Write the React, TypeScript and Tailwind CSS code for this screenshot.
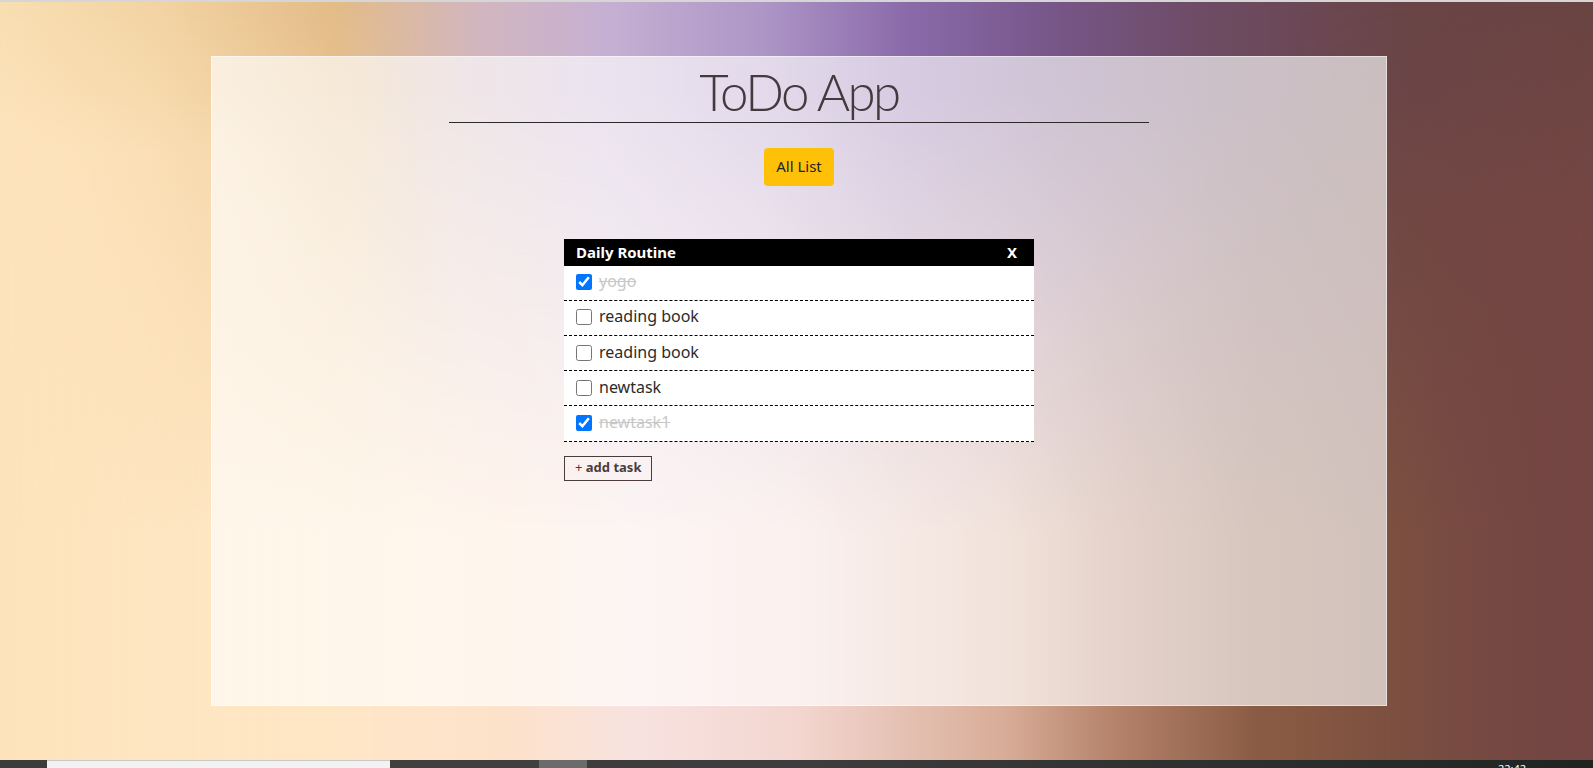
import React from "react";

const tasks = [
  { name: "yogo", done: true },
  { name: "reading book", done: false },
  { name: "reading book", done: false },
  { name: "newtask", done: false },
  { name: "newtask1", done: true },
];

function TaskRow({ name, done }: { name: string; done: boolean }) {
  return (
    <li className="flex h-[35.2px] items-center gap-[7px] border-b border-dashed border-black bg-white px-3 pb-[3px]">
      <input type="checkbox" checked={done} readOnly className="mt-[2px] h-4 w-4 accent-[#0075ff]" />
      <span className={done ? "text-[#c8c8c8] line-through" : "text-[#2b2b2b]"}>{name}</span>
    </li>
  );
}

export default function App() {
  return (
    <div
      className="flex h-[768px] w-full flex-col overflow-hidden text-[16px]"
      style={{ fontFamily: "'Noto Sans', 'Open Sans', sans-serif" }}
    >
      <div className="h-[2px] bg-[#d6d6d6]" />

      <main className="relative flex-1 bg-[linear-gradient(90deg,#ffedd2_0%,#ffe8c8_20%,#fde2cb_32%,#f8e2e0_40%,#f3d6d0_50%,#d8ad98_63%,#b5826a_70%,#8a5b44_79%,#80553f_88%,#744743_100%)]">
        <div className="pointer-events-none absolute inset-0 bg-[linear-gradient(90deg,#f8dfb2_0%,#f3d3a3_10%,#e3bc88_21%,#d2b6bf_30%,#c6b0d2_38%,#ad95c6_48%,#8a6aaa_57%,#775689_66%,#6d4b63_76%,#6a4547_88%,#6a4442_100%)] [mask-image:linear-gradient(to_bottom,black_0%,black_12%,transparent_70%)]" />
        <div className="pointer-events-none absolute inset-y-0 left-0 w-[420px] bg-[linear-gradient(90deg,#fde3bb_0%,rgba(253,227,187,0)_100%)] [mask-image:linear-gradient(to_bottom,transparent_0%,black_20%,black_100%)]" />
        <div className="pointer-events-none absolute inset-y-0 right-0 w-[300px] bg-[linear-gradient(270deg,#744644_0%,rgba(116,70,68,0)_100%)] [mask-image:linear-gradient(to_bottom,transparent_0%,black_30%,black_100%)]" />

        <section className="relative ml-[211px] mt-[54px] flex h-[650px] w-[1176px] flex-col items-center border border-white/50 bg-white/65">
          <h1
            className="mt-[6px] text-[51px] font-light leading-[1.15] tracking-[-2.5px] text-[#433a3f]"
            style={{ fontFamily: "Lato, sans-serif" }}
          >
            ToDo App
          </h1>
          <div className="h-px w-[700px] bg-[#2a2a2a]" />

          <button className="mt-[25px] h-[38px] rounded bg-[#ffc107] px-3 text-[15px] text-[#212529]">
            All List
          </button>

          <div className="mt-[53px] w-[470px]">
            <div className="flex h-[27px] items-center justify-between bg-black px-3 text-[15px] font-bold text-white">
              <span>Daily Routine</span>
              <span className="pr-[5px]">X</span>
            </div>
            <ul>
              {tasks.map((t, i) => (
                <TaskRow key={i} name={t.name} done={t.done} />
              ))}
            </ul>
            <button className="mt-[14px] h-[25px] border border-[#4a3c3c] px-[10px] text-[13px] text-[#4a3c3c]">
              + <span className="font-bold">add task</span>
            </button>
          </div>
        </section>
      </main>

      <div className="flex h-[8px] bg-[linear-gradient(90deg,#3d3d3d_0%,#3d3d3d_50%,#1f2421_100%)]">
        <div className="w-[47px] bg-[#3a3d3c]" />
        <div className="w-[343px] border-t border-[#c8c8c8] bg-[#f2f2f2]" />
        <div className="w-[149px] bg-[#404040]" />
        <div className="w-[48px] bg-[#6b6b6b]" />
        <div className="flex-1" />
        <div className="mr-[67px] pt-[3px] text-[11px] leading-none text-white">22:42</div>
      </div>
    </div>
  );
}
